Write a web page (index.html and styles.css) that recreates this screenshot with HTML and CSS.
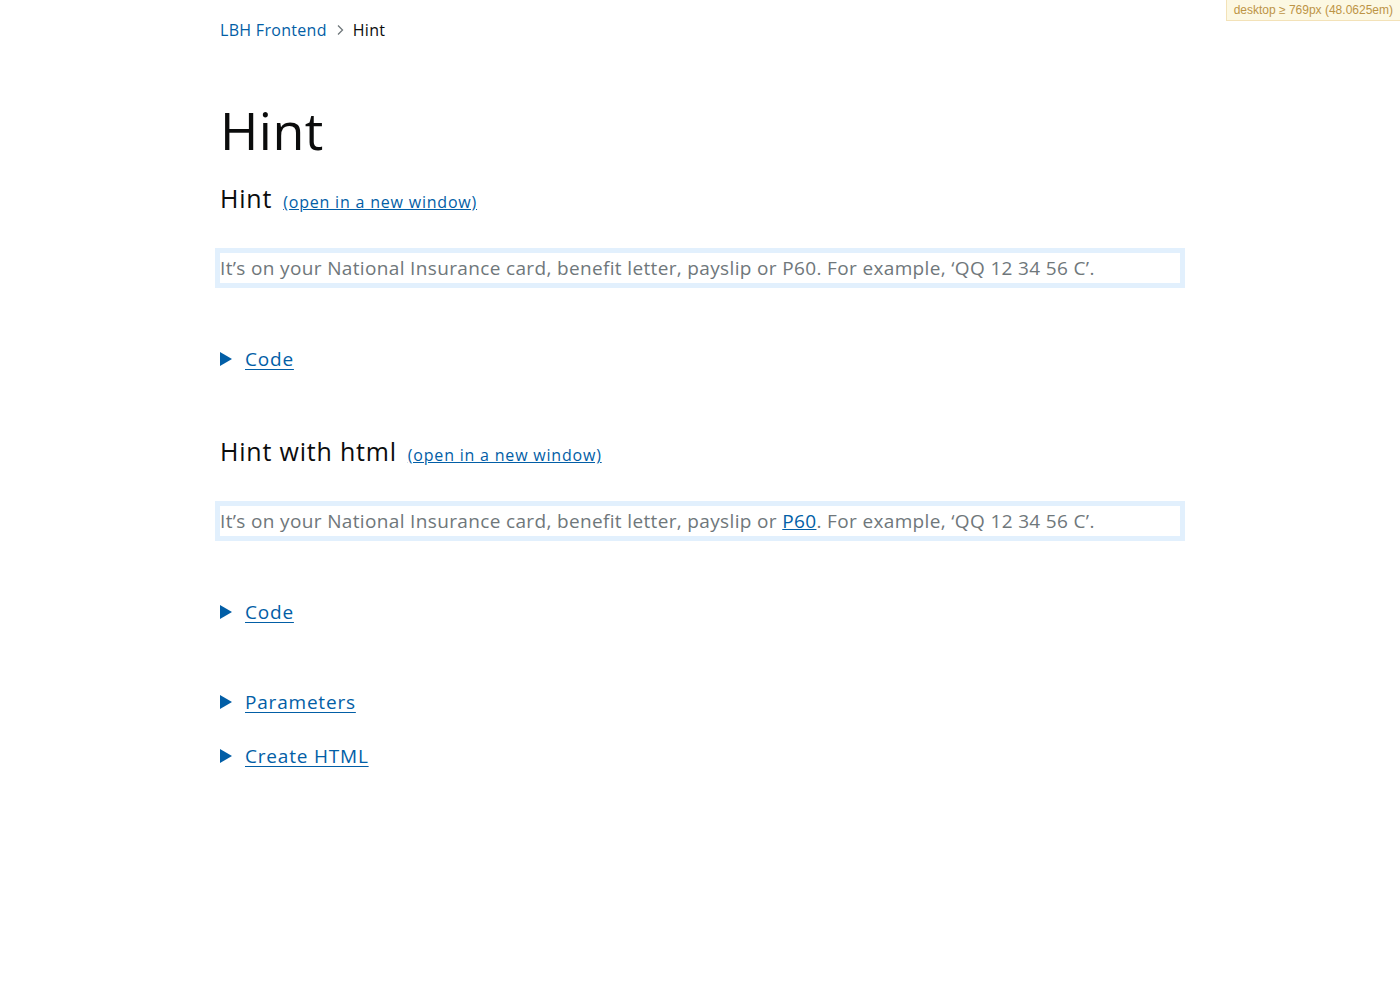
FILE: index.html
```html
<!DOCTYPE html>
<html lang="en">
<head>
<meta charset="utf-8">
<title>Hint – LBH Frontend</title>
<link rel="stylesheet" href="styles.css">
</head>
<body>
<div class="mq-badge">desktop ≥ 769px (48.0625em)</div>
<div class="page">
  <nav class="breadcrumbs">
    <a class="crumb-link" href="#">LBH Frontend</a>
    <svg class="chev" width="10" height="12" viewBox="0 0 10 12"><path d="M3 1.5 L7.5 6 L3 10.5" fill="none" stroke="#6f777b" stroke-width="1.3"/></svg>
    <span class="crumb-current">Hint</span>
  </nav>

  <h1 class="title">Hint</h1>

  <section class="example">
    <h2 class="ex-heading">Hint <a class="new-window" href="#">(open in a new window)</a></h2>
    <div class="frame"><div class="hint">It’s on your National Insurance card, benefit letter, payslip or P60. For example, ‘QQ 12 34 56 C’.</div></div>
    <details class="disclosure code"><summary><span class="tri"></span><span class="sum-text">Code</span></summary></details>
  </section>

  <section class="example">
    <h2 class="ex-heading">Hint with html <a class="new-window" href="#">(open in a new window)</a></h2>
    <div class="frame"><div class="hint">It’s on your National Insurance card, benefit letter, payslip or <a href="#" class="hint-link">P60</a>. For example, ‘QQ 12 34 56 C’.</div></div>
    <details class="disclosure code"><summary><span class="tri"></span><span class="sum-text">Code</span></summary></details>
  </section>

  <details class="disclosure params"><summary><span class="tri"></span><span class="sum-text">Parameters</span></summary></details>
  <details class="disclosure create"><summary><span class="tri"></span><span class="sum-text">Create HTML</span></summary></details>
</div>
</body>
</html>
```
FILE: styles.css
```css
html, body { margin: 0; padding: 0; background: #fff; }
body {
  font-family: "Open Sans", "DejaVu Sans", sans-serif;
  color: #0b0c0c;
}
.mq-badge {
  position: absolute;
  top: 0;
  right: 0;
  background: #fcf8e3;
  border: 1px solid #f3e2b8;
  border-top: 0;
  border-right: 0;
  color: #bc9446;
  font-family: "Liberation Sans", Arial, sans-serif;
  font-size: 12px;
  line-height: 20px;
  padding: 0 7px 0 7px;
}
.page {
  width: 960px;
  margin: 0 auto;
}
.breadcrumbs {
  display: flex;
  align-items: center;
  height: 20px;
  padding-top: 20px;
  font-size: 16px;
  letter-spacing: 0.3px;
}
.crumb-link { color: #025ea6; text-decoration: none; }
.chev { margin: 0 8px 0 8px; }
.crumb-current { color: #0b0c0c; }
.title {
  font-weight: 400;
  font-size: 52px;
  letter-spacing: 0.5px;
  line-height: 60px;
  margin: 60px 0 0;
}
.ex-heading {
  font-weight: 400;
  font-size: 25px;
  letter-spacing: 0.8px;
  line-height: 30px;
  margin: 23px 0 0;
  display: flex;
  align-items: baseline;
}
.example + .example .ex-heading { margin-top: 62px; }
.new-window {
  font-size: 16px;
  letter-spacing: 0.8px;
  color: #025ea6;
  margin-left: 11px;
}
.frame {
  margin: 31px -5px 0 -5px;
  border: 5px solid #e2f0fd;
  height: 30px;
  display: flex;
  align-items: center;
}
.hint {
  color: #6f777b;
  font-size: 19px;
  letter-spacing: 0.35px;
  line-height: 30px;
}
.hint-link { color: #025ea6; }
.disclosure summary {
  list-style: none;
  display: flex;
  align-items: center;
  cursor: pointer;
  font-size: 19px;
  letter-spacing: 0.8px;
  line-height: 30px;
}
.disclosure summary::-webkit-details-marker { display: none; }
.tri {
  width: 0; height: 0;
  border-left: 12px solid #025ea6;
  border-top: 7px solid transparent;
  border-bottom: 7px solid transparent;
  margin-right: 13px;
}
.sum-text { color: #025ea6; text-decoration: underline; text-underline-offset: 3px; text-decoration-thickness: 1px; }
.code { margin-top: 56px; }
.params { margin-top: 60px; }
.create { margin-top: 24px; }
```
